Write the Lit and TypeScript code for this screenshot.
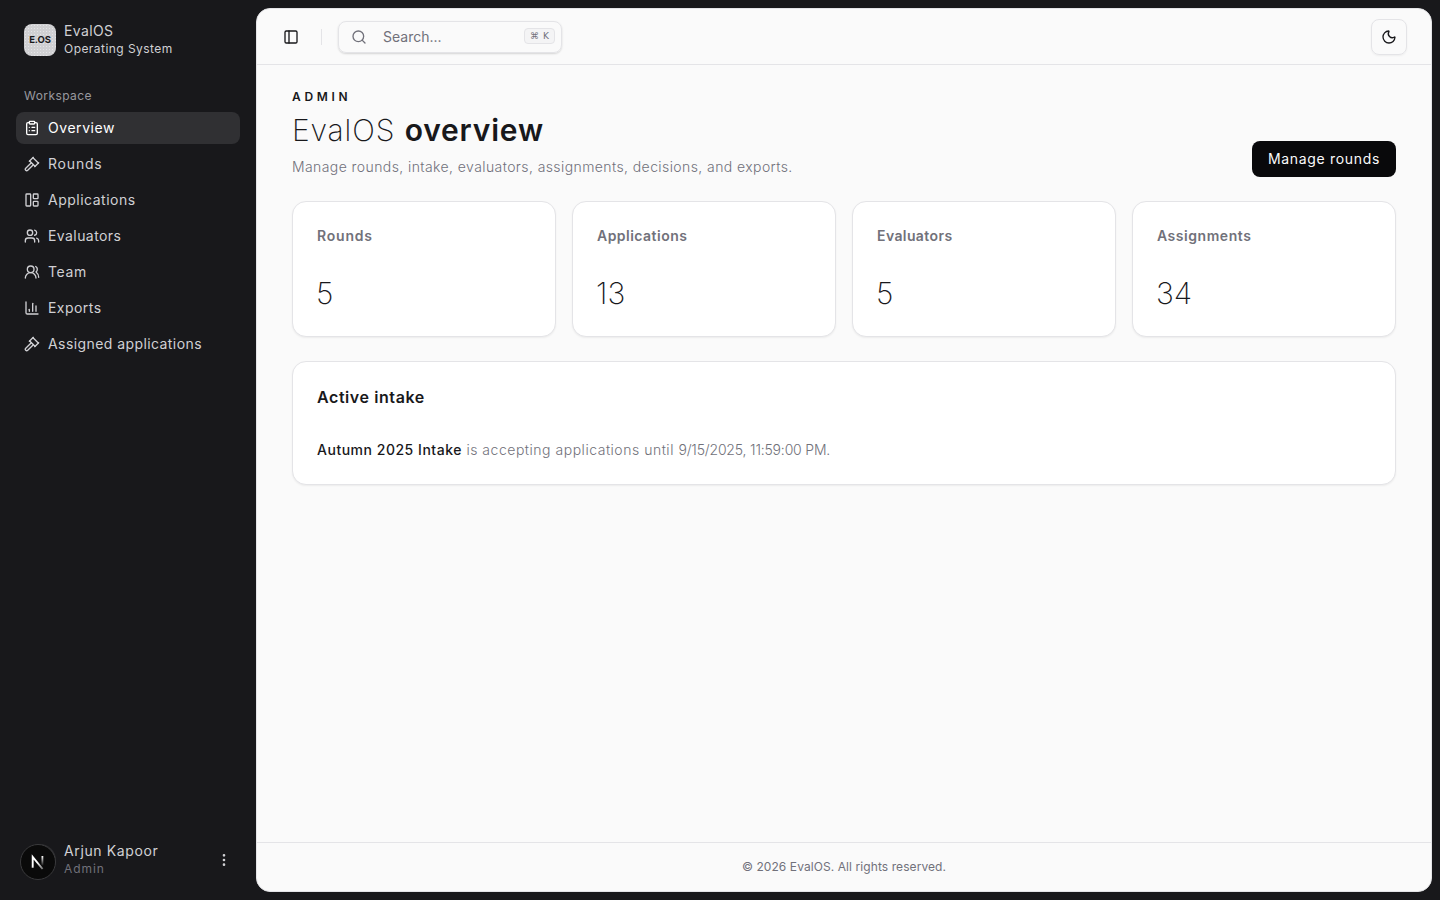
import { LitElement, html, svg, css } from "lit";
import { customElement } from "lit/decorators.js";

const icon = (body: unknown, size = 16, cls = "") => html`<svg class=${cls} width=${size} height=${size} viewBox="0 0 24 24" fill="none" stroke="currentColor" stroke-width="2" stroke-linecap="round" stroke-linejoin="round" aria-hidden="true">${body}</svg>`;

const gavel = svg`<path d="m14 13-8.381 8.38a1 1 0 0 1-3.001-3l8.384-8.381"/><path d="m16 16 6-6"/><path d="m21.5 10.5-8-8"/><path d="m8 8 6-6"/><path d="m8.5 7.5 8 8"/>`;
const clipboard = svg`<rect width="8" height="4" x="8" y="2" rx="1" ry="1"/><path d="M16 4h2a2 2 0 0 1 2 2v14a2 2 0 0 1-2 2H6a2 2 0 0 1-2-2V6a2 2 0 0 1 2-2h2"/><path d="M12 11h4"/><path d="M12 16h4"/><path d="M8 11h.01"/><path d="M8 16h.01"/>`;
const panels = svg`<rect width="7" height="18" x="3" y="3" rx="1"/><rect width="7" height="7" x="14" y="3" rx="1"/><rect width="7" height="7" x="14" y="14" rx="1"/>`;
const users = svg`<path d="M16 21v-2a4 4 0 0 0-4-4H6a4 4 0 0 0-4 4v2"/><path d="M16 3.128a4 4 0 0 1 0 7.744"/><path d="M22 21v-2a4 4 0 0 0-3-3.87"/><circle cx="9" cy="7" r="4"/>`;
const team = svg`<path d="M18 21a8 8 0 0 0-16 0"/><circle cx="10" cy="8" r="5"/><path d="M22 20c0-3.37-2-6.5-4-8a5 5 0 0 0-.45-8.3"/>`;
const chart = svg`<path d="M3 3v16a2 2 0 0 0 2 2h16"/><path d="M18 17V9"/><path d="M13 17V5"/><path d="M8 17v-3"/>`;
const sidebarIcon = svg`<rect width="18" height="18" x="3" y="3" rx="2"/><path d="M9 3v18"/>`;
const search = svg`<path d="m21 21-4.34-4.34"/><circle cx="11" cy="11" r="8"/>`;
const moon = svg`<path d="M20.985 12.486a9 9 0 1 1-9.473-9.472c.405-.022.617.46.402.803a6 6 0 0 0 8.268 8.268c.344-.215.825-.004.803.401"/>`;
const dots = svg`<circle cx="12" cy="12" r="1"/><circle cx="12" cy="5" r="1"/><circle cx="12" cy="19" r="1"/>`;

interface Entry {
  label: string;
  tracking: number;
}

const nav: (Entry & { glyph: unknown; active?: boolean })[] = [
  { label: "Overview", glyph: clipboard, tracking: 0.55, active: true },
  { label: "Rounds", glyph: gavel, tracking: 0.8 },
  { label: "Applications", glyph: panels, tracking: 0.5 },
  { label: "Evaluators", glyph: users, tracking: 0.42 },
  { label: "Team", glyph: team, tracking: 0.65 },
  { label: "Exports", glyph: chart, tracking: 0.45 },
  { label: "Assigned applications", glyph: gavel, tracking: 0.42 },
];

const stats: (Entry & { value: string })[] = [
  { label: "Rounds", value: "5", tracking: 0.8 },
  { label: "Applications", value: "13", tracking: 0.47 },
  { label: "Evaluators", value: "5", tracking: 0.4 },
  { label: "Assignments", value: "34", tracking: 0.54 },
];

@customElement("app-root")
export class AppRoot extends LitElement {
  static styles = css`
    :host { display: block; height: 100vh; font-family: Inter, "Open Sans", sans-serif; font-size: 14px; line-height: 20px; color: #18181b; background: #18181b; overflow: hidden; }
    * { box-sizing: border-box; }
    svg { display: block; flex: none; }
    h1, h2, p { margin: 0; }
    .shell { display: flex; height: 100%; white-space: nowrap; }

    .sidebar { width: 256px; padding: 16px; display: flex; flex-direction: column; color: #d0d0d4; }
    .row { display: flex; gap: 8px; height: 48px; padding: 0 8px 2px; align-items: center; }
    .logo { width: 32px; height: 32px; margin-top: 2px; border-radius: 8px; background: radial-gradient(circle, #e4e4e7 0.6px, #d0d0d3 1px) 0 0 / 3px 3px; color: #18181b; display: grid; place-items: center; font-size: 9.5px; line-height: 12px; font-weight: 700; letter-spacing: -0.1px; }
    .stack { display: flex; flex-direction: column; flex: 1; }
    .product { letter-spacing: 0.38px; }
    .tagline { font-size: 12px; line-height: 16px; letter-spacing: 0.45px; }
    .group { font-size: 12px; line-height: 32px; margin-top: 16px; padding: 0 8px; color: #98989f; letter-spacing: 0.42px; }
    .nav { display: flex; flex-direction: column; gap: 4px; }
    .item { display: flex; align-items: center; gap: 8px; height: 32px; padding: 0 8px; border-radius: 8px; }
    .active { background: #303033; color: #fff; }
    .user { margin-top: auto; position: relative; padding-bottom: 0; }
    .user .stack { margin-top: -2px; }
    .avatar { width: 32px; height: 32px; border-radius: 50%; background: #2c2c2f; }
    .badge { position: absolute; left: 4px; top: 8px; width: 36px; height: 36px; }
    .name { letter-spacing: 0.62px; }
    .role { font-size: 12px; line-height: 16px; letter-spacing: 0.95px; color: #71717a; }

    .main { flex: 1; margin: 8px 8px 8px 0; border-radius: 14px; background: #fafafa; display: flex; flex-direction: column; border: 1px solid #e4e4e7; }
    .topbar { height: 56px; border-bottom: 1px solid #e4e4e7; display: flex; align-items: center; padding: 0 24px 0 26px; }
    .divider { width: 1px; height: 16px; background: #e4e4e7; margin: 0 16px 0 22px; }
    .search { width: 224px; height: 32px; border: 1px solid #e4e4e7; border-radius: 8px; box-shadow: 0 1px 2px rgba(0, 0, 0, 0.15); display: flex; align-items: center; padding: 0 6px 0 12px; color: #71717a; }
    .placeholder { flex: 1; margin-left: 16px; }
    .kbd { width: 31px; height: 16px; margin-bottom: 2px; border: 1px solid #e4e4e7; border-radius: 4px; background: #f4f4f5; display: flex; align-items: center; justify-content: center; gap: 4px; font: 500 9px/14px "DejaVu Sans", sans-serif; }
    .theme { margin-left: auto; width: 36px; height: 36px; border: 1px solid #e4e4e7; border-radius: 8px; box-shadow: 0 1px 2px rgba(0, 0, 0, 0.05); display: grid; place-items: center; }

    .content { flex: 1; padding: 24px 35px; display: flex; flex-direction: column; gap: 24px; }
    .head { display: flex; justify-content: space-between; align-items: flex-end; }
    .eyebrow { font-size: 12px; line-height: 16px; font-weight: 600; letter-spacing: 3.65px; }
    h1 { font-size: 30px; line-height: 36px; font-weight: 200; letter-spacing: 0.9px; margin: 7px 0 9px; }
    h1 b { font-weight: 600; letter-spacing: 0.8px; }
    .lead { font-weight: 300; color: #71717a; letter-spacing: 0.41px; }
    .button { height: 36px; width: 144px; border-radius: 8px; background: #09090b; color: #fafafa; display: grid; place-items: center; font-weight: 400; letter-spacing: 0.68px; }
    .stats { display: grid; grid-template-columns: repeat(4, 1fr); gap: 16px; }
    .card { background: #fff; border: 1px solid #e4e4e7; border-radius: 14px; padding: 24px; box-shadow: 0 1px 2px rgba(0, 0, 0, 0.06); }
    .stat { height: 136px; display: flex; flex-direction: column; justify-content: space-between; padding-bottom: 25px; }
    .label { font-weight: 600; color: #71717a; }
    .value { font-size: 30px; line-height: 36px; font-weight: 200; margin-left: -1px; }
    .intake { height: 124px; display: flex; flex-direction: column; justify-content: space-between; padding-top: 23px; }
    h2 { font-size: 16px; line-height: 24px; font-weight: 600; letter-spacing: 0.58px; }
    .note { font-weight: 300; color: #71717a; letter-spacing: 0.52px; }
    .note b { font-weight: 500; color: #18181b; letter-spacing: 0.52px; }
    .date { letter-spacing: -0.18px; }
    .footer { height: 49px; border-top: 1px solid #e4e4e7; display: grid; place-items: center; font-size: 12px; line-height: 16px; letter-spacing: 0.08px; color: #71717a; }
  `;

  render() {
    return html`<div class="shell">
      <aside class="sidebar">
        <div class="row">
          <div class="logo">E.OS</div>
          <div class="stack"><span class="product">EvalOS</span><span class="tagline">Operating System</span></div>
        </div>
        <div class="group">Workspace</div>
        <nav class="nav">
          ${nav.map((n) => html`<a class="item ${n.active ? "active" : ""}">${icon(n.glyph)}<span style="letter-spacing:${n.tracking}px">${n.label}</span></a>`)}
        </nav>
        <div class="row user">
          <div class="avatar"></div>
          <div class="stack"><span class="name">Arjun Kapoor</span><span class="role">Admin</span></div>
          ${icon(dots)}
          <svg class="badge" viewBox="0 0 36 36" aria-hidden="true">
            <defs>
              <linearGradient id="stem" x1="0" y1="12" x2="0" y2="22" gradientUnits="userSpaceOnUse"><stop stop-color="#fff"/><stop offset="1" stop-color="#fff" stop-opacity="0"/></linearGradient>
              <linearGradient id="diag" x1="18" y1="18" x2="24" y2="26" gradientUnits="userSpaceOnUse"><stop stop-color="#fff"/><stop offset="1" stop-color="#fff" stop-opacity="0.3"/></linearGradient>
            </defs>
            <circle cx="18" cy="18" r="17.5" fill="#0a0a0a" stroke="#3a3a3c"/>
            <path d="M12.7 23.8V13L22.6 25" fill="none" stroke="url(#diag)" stroke-width="1.9"/>
            <path d="M22.4 12v9.5" fill="none" stroke="url(#stem)" stroke-width="1.8"/>
          </svg>
        </div>
      </aside>
      <main class="main">
        <header class="topbar">
          ${icon(sidebarIcon)}
          <span class="divider"></span>
          <div class="search">${icon(search)}<span class="placeholder">Search...</span><span class="kbd"><span>⌘</span><span>K</span></span></div>
          <div class="theme">${icon(moon)}</div>
        </header>
        <div class="content">
          <div class="head">
            <div>
              <div class="eyebrow">ADMIN</div>
              <h1>EvalOS <b>overview</b></h1>
              <p class="lead">Manage rounds, intake, evaluators, assignments, decisions, and exports.</p>
            </div>
            <a class="button">Manage rounds</a>
          </div>
          <section class="stats">
            ${stats.map((s) => html`<div class="card stat"><span class="label" style="letter-spacing:${s.tracking}px">${s.label}</span><span class="value">${s.value}</span></div>`)}
          </section>
          <section class="card intake">
            <h2>Active intake</h2>
            <p class="note"><b>Autumn 2025 Intake</b> is accepting applications until <span class="date">9/15/2025, 11:59:00 PM.</span></p>
          </section>
        </div>
        <footer class="footer">© 2026 EvalOS. All rights reserved.</footer>
      </main>
    </div>`;
  }
}
